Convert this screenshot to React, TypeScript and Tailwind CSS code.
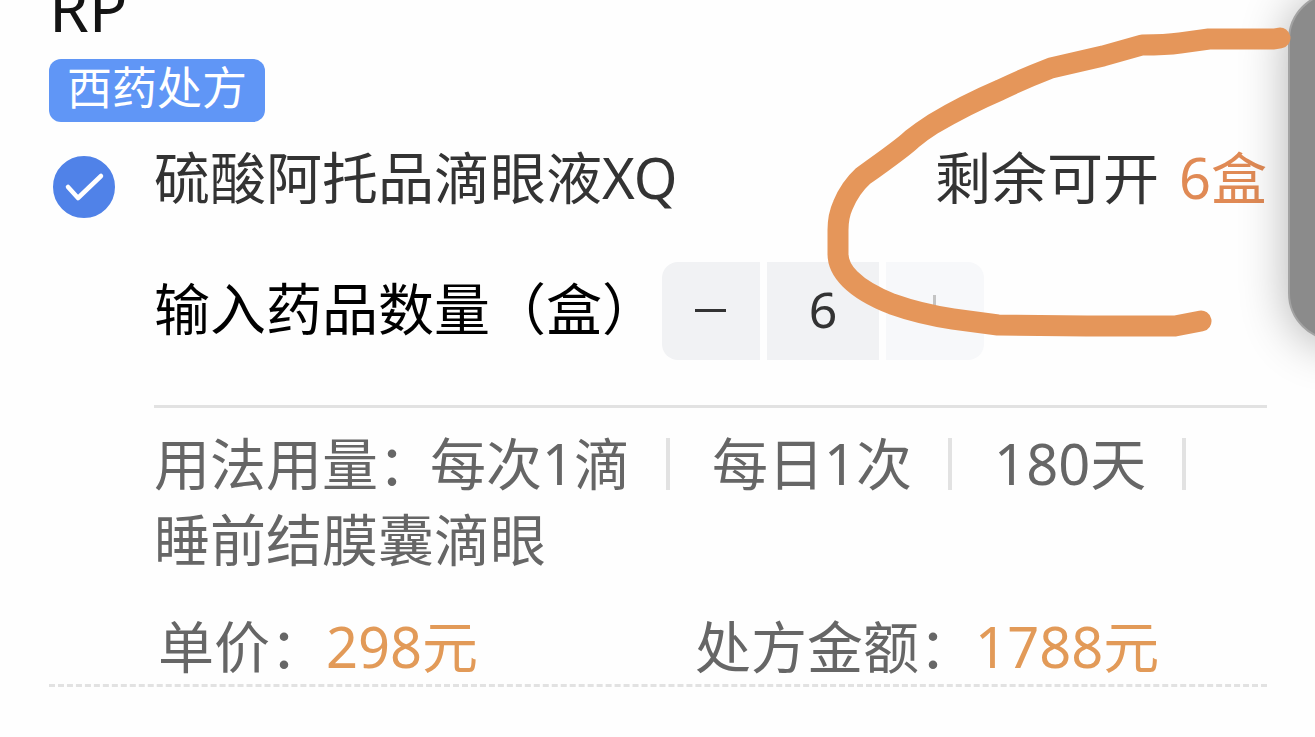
import { useState } from "react";
import { cva } from "class-variance-authority";

const MAX_QUANTITY = 6;

const usageItems = ["每次1滴", "每日1次", "180天"];

const stepButton = cva("flex h-[98px] w-[98px] items-center justify-center", {
  variants: {
    side: {
      left: "rounded-l-2xl",
      right: "rounded-r-2xl",
    },
    disabled: {
      true: "bg-[#f7f8fa] text-[#c4c4c4]",
      false: "bg-[#f1f2f4] text-[#333333]",
    },
  },
});

interface StepperProps {
  id: string;
  value: number;
  max: number;
  onChange: (value: number) => void;
}

function Stepper({ id, value, max, onChange }: StepperProps) {
  return (
    <div className="ml-1 flex gap-[7px]">
      <button
        type="button"
        aria-label="减少"
        disabled={value <= 1}
        onClick={() => onChange(value - 1)}
        className={stepButton({ side: "left", disabled: value <= 1 })}
      >
        <svg className="h-8 w-8" viewBox="0 0 32 32" fill="none" stroke="currentColor" strokeWidth="3">
          <path d="M0 15.5H31" />
        </svg>
      </button>
      <input
        id={id}
        type="text"
        inputMode="numeric"
        value={value}
        onChange={(e) => onChange(Math.min(max, Math.max(1, Number(e.target.value) || 1)))}
        className="h-[98px] w-28 bg-[#f1f2f4] pb-1 text-center text-[50px] text-[#333333] outline-none"
      />
      <button
        type="button"
        aria-label="增加"
        disabled={value >= max}
        onClick={() => onChange(value + 1)}
        className={stepButton({ side: "right", disabled: value >= max })}
      >
        <svg className="h-8 w-8" viewBox="0 0 32 32" fill="none" stroke="currentColor" strokeWidth="3">
          <path d="M0 15.5H31M15.5 0V31" />
        </svg>
      </button>
    </div>
  );
}

/** Hand-drawn mark around the remaining amount */
function MarkerStroke() {
  return (
    <svg
      className="pointer-events-none absolute top-0 right-0 h-[360px] w-[495px]"
      viewBox="820 0 495 360"
      fill="none"
      stroke="#e5965a"
      strokeWidth="21"
      strokeLinecap="round"
      strokeLinejoin="round"
      aria-hidden
    >
      <path d="M1280 38L1274 39H1209L1180 43Q1166 45 1142 45L1103 56L1051 68Q1025 78 1000 90Q965 105 933 124Q922 131 912 139Q904 147 863 176Q850 188 843 205Q838 216 838 230V254Q838 267 850 279Q864 293 892 304Q920 314 953 319Q975 322 998 325L1087 326H1175L1201 321" />
    </svg>
  );
}

export default function App() {
  const [checked, setChecked] = useState(true);
  const [quantity, setQuantity] = useState(6);

  return (
    <main className="relative min-h-screen overflow-hidden bg-[#fefefe] pr-12 pl-[49px] font-['Noto_Sans','Noto_Sans_CJK_SC',sans-serif] text-[56px] text-[#666666]">
      <h1 className="-mt-6 text-[64px] leading-[64px] text-[#141414]">RP</h1>
      <span className="mt-[19px] block h-[63px] w-fit rounded-xl bg-[#6096f6] px-[18px] text-[45px] leading-[58px] text-white">
        西药处方
      </span>

      <section className="mt-4 flex">
        <div className="w-[105px] shrink-0 pt-[18px] pl-1">
          <div className="relative h-[62px] w-[62px]">
            <input
              id="drug"
              type="checkbox"
              checked={checked}
              onChange={(e) => setChecked(e.target.checked)}
              className="block h-full w-full appearance-none rounded-full border-2 border-[#5082e8] checked:bg-[#5082e8]"
            />
            {checked && (
              <svg
                className="pointer-events-none absolute inset-0"
                viewBox="0 0 62 62"
                fill="none"
                stroke="#ffffff"
                strokeWidth="4.500"
                strokeLinecap="round"
                strokeLinejoin="round"
              >
                <path d="M15 31L25 42L48 20" />
              </svg>
            )}
          </div>
        </div>

        <div className="min-w-0 flex-1">
          <div className="flex justify-between leading-[78px] text-[#333333]">
            <label htmlFor="drug">硫酸阿托品滴眼液XQ</label>
            <p className="flex gap-5">
              剩余可开
              <span className="text-[#e08a55]">{MAX_QUANTITY}盒</span>
            </p>
          </div>

          <div className="mt-[46px] flex items-center">
            <label htmlFor="quantity" className="pb-1.5 leading-[72px] text-black">
              输入药品数量（盒）
            </label>
            <Stepper id="quantity" value={quantity} max={MAX_QUANTITY} onChange={setQuantity} />
          </div>

          <hr className="mt-[45px] border-t-[3px] border-[#e2e2e2]" />

          <div className="mt-[18px] flex flex-wrap leading-[74px]">
            <span className="-mr-1 pb-0.5">用法用量：</span>
            {usageItems.map((item) => (
              <span key={item} className="mr-[42px] flex items-center gap-9">
                <span className="pb-0.5">{item}</span>
                <span className="h-[52px] w-1 bg-[#e2e2e2]" />
              </span>
            ))}
            <span className="pb-0.5">睡前结膜囊滴眼</span>
          </div>

          <div className="mt-[30px] flex gap-[217px] pl-1 leading-[76px]">
            <p>
              单价：<span className="text-[#e29a58]">298元</span>
            </p>
            <p>
              处方金额：<span className="text-[#e29a58]">1788元</span>
            </p>
          </div>
        </div>
      </section>

      <hr className="border-t-[3px] border-dashed border-[#e2e2e2]" />

      {/* floating side handle, mostly off screen */}
      <div className="absolute -top-2 -right-[69px] h-[349px] w-24 rounded-[56px] border-2 border-[#a3a3a3] bg-[#8b8b8b] shadow-[0_4px_48px_rgba(0,0,0,0.3)]" />
      <MarkerStroke />
    </main>
  );
}
